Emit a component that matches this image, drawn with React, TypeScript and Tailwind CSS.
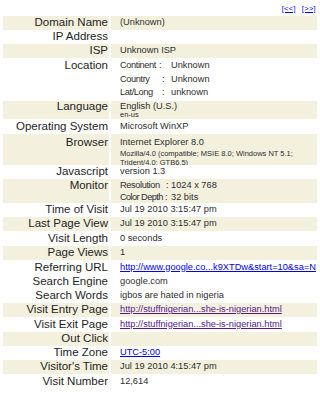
import React from "react";

type RowProps = {
  label: string;
  shade?: boolean;
  h: string;
  top?: string;
  children?: React.ReactNode;
};

function Row({ label, shade, h, top, children }: RowProps) {
  const bg = shade ? "bg-[#f3f0de]" : "bg-white";
  return (
    <div className={`flex gap-[2px] ${h}`}>
      <div
        className={`w-[106px] shrink-0 pr-[1px] text-right text-[11.5px] text-[#1e1e1e] whitespace-nowrap ${bg} ${
          top ? top : "flex items-center justify-end"
        }`}
      >
        {label}
      </div>
      <div
        className={`min-w-0 flex-1 overflow-hidden whitespace-nowrap pl-[9px] text-[9.25px] text-[#2e2e2e] ${bg} ${
          top ? top : "flex items-center"
        }`}
      >
        {children}
      </div>
    </div>
  );
}

function Pair({ k, kw, cw, v }: { k: string; kw: string; cw: string; v: string }) {
  return (
    <div className="flex">
      <span className={`shrink-0 ${kw}`}>{k}</span>
      <span className={`shrink-0 ${cw}`}>:</span>
      <span>{v}</span>
    </div>
  );
}

export default function App() {
  return (
    <div className="w-[320px] h-[400px] bg-white px-[3px] font-['Liberation_Sans',Arial,Helvetica,sans-serif]">
      <div className="flex h-[16px] items-start justify-end gap-[6px] pt-[4px] pr-[1px] text-[7.5px] leading-[9px] tracking-[0.3px]">
        <a className="text-[#0000ee] underline">[&lt;&lt;]</a>
        <a className="text-[#0000ee] underline">[&gt;&gt;]</a>
      </div>

      <Row label="Domain Name" shade h="h-[14px]">(Unknown)</Row>
      <Row label="IP Address" h="h-[14px]" />
      <Row label="ISP" shade h="h-[14px]">Unknown ISP</Row>

      <Row label="Location" h="h-[43px]" top="pt-[1px] leading-[13.5px]">
        <div>
          <Pair k="Continent" kw="w-[39px] tracking-[-0.4px]" cw="w-[12px]" v="Unknown" />
          <Pair k="Country" kw="w-[42px] tracking-[-0.4px]" cw="w-[9px]" v="Unknown" />
          <Pair k="Lat/Long" kw="w-[42px] tracking-[-0.4px]" cw="w-[9px]" v="unknown" />
        </div>
      </Row>

      <Row label="Language" shade h="h-[18px]" top="leading-[10px]">
        <div>
          <div>English (U.S.)</div>
          <div className="text-[7.5px] leading-[7px]">en-us</div>
        </div>
      </Row>

      <Row label="Operating System" h="h-[15px]">Microsoft WinXP</Row>

      <Row label="Browser" shade h="h-[31px]" top="pt-[1px] leading-[14px]">
        <div>
          <div>Internet Explorer 8.0</div>
          <div className="pt-[1px] text-[7.5px] leading-[8.5px]">
            <div>Mozilla/4.0 (compatible; MSIE 8.0; Windows NT 5.1;</div>
            <div>Trident/4.0; GTB6.5)</div>
          </div>
        </div>
      </Row>

      <Row label="Javascript" h="h-[14px]">version 1.3</Row>

      <Row label="Monitor" shade h="h-[24px]" top="leading-[13px]">
        <div>
          <Pair k="Resolution" kw="w-[46px] tracking-[-0.4px]" cw="w-[5px]" v="1024 x 768" />
          <div className="leading-[10px]">
            <Pair k="Color Depth" kw="w-[45px] tracking-[-0.6px]" cw="w-[6px]" v="32 bits" />
          </div>
        </div>
      </Row>

      <Row label="Time of Visit" h="h-[14px]">Jul 19 2010 3:15:47 pm</Row>
      <Row label="Last Page View" shade h="h-[14px]">Jul 19 2010 3:15:47 pm</Row>
      <Row label="Visit Length" h="h-[15px]">0 seconds</Row>
      <Row label="Page Views" shade h="h-[14px]">1</Row>
      <Row label="Referring URL" h="h-[15px]">
        <a className="text-[#0000ee] underline">http://www.google.co...k9XTDw&amp;start=10&amp;sa=N</a>
      </Row>
      <Row label="Search Engine" h="h-[14px]">google.com</Row>
      <Row label="Search Words" h="h-[14px]">igbos are hated in nigeria</Row>
      <Row label="Visit Entry Page" shade h="h-[14px]">
        <a className="text-[#551a8b] underline">http://stuffnigerian...she-is-nigerian.html</a>
      </Row>
      <Row label="Visit Exit Page" h="h-[15px]">
        <a className="text-[#551a8b] underline">http://stuffnigerian...she-is-nigerian.html</a>
      </Row>
      <Row label="Out Click" shade h="h-[14px]" />
      <Row label="Time Zone" h="h-[14px]">
        <a className="text-[#0000ee] underline">UTC-5:00</a>
      </Row>
      <Row label="Visitor's Time" shade h="h-[14px]">Jul 19 2010 4:15:47 pm</Row>
      <Row label="Visit Number" h="h-[15px]">12,614</Row>
    </div>
  );
}
